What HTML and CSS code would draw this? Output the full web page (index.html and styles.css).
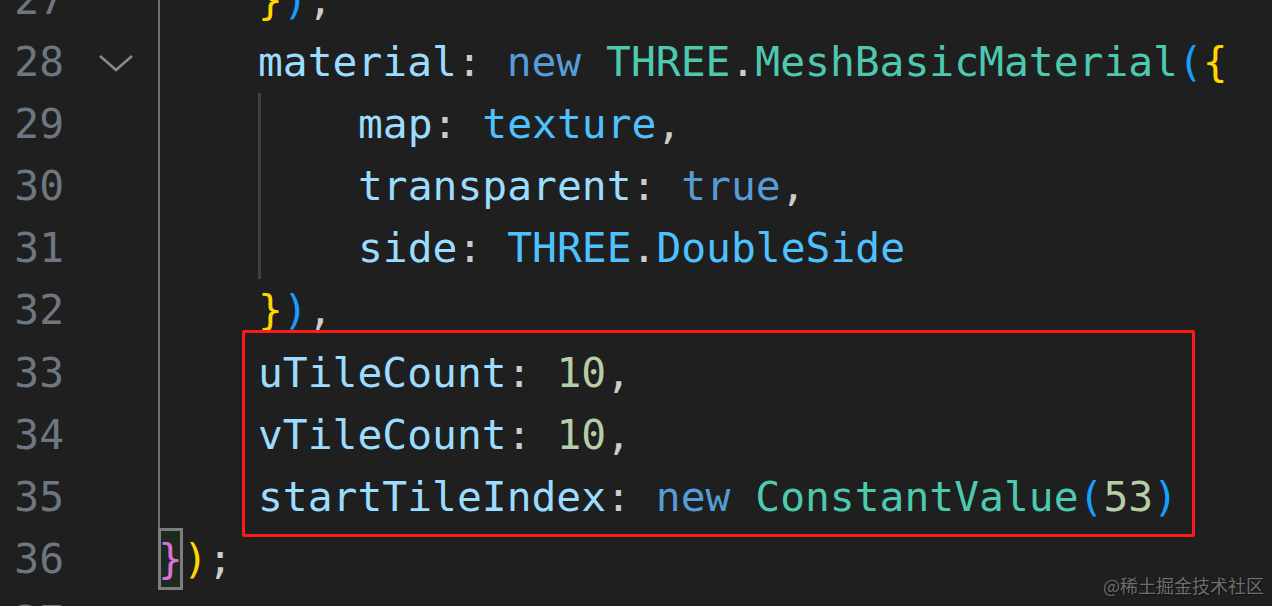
FILE: index.html
```html
<!DOCTYPE html>
<html lang="en">
<head>
<meta charset="utf-8">
<title>Editor</title>
<link rel="stylesheet" href="styles.css">
</head>
<body>
<div class="editor">
  <div class="lines">
    <div class="row"><span class="ln">27</span><span class="fold"></span><span class="code"><span class="ind g1"></span><span class="b1">}</span><span class="b3">)</span><span class="p">,</span></span></div>
    <div class="row"><span class="ln">28</span><span class="fold"><svg class="chev" width="36" height="20" viewBox="0 0 36 20"><polyline points="2,3 18,17 34,3" fill="none" stroke="#8a8a8a" stroke-width="2.6"/></svg></span><span class="code"><span class="ind g1"></span><span class="prop">material</span><span class="p">: </span><span class="kw">new </span><span class="cls">THREE</span><span class="p">.</span><span class="cls">MeshBasicMaterial</span><span class="b3">(</span><span class="b1">{</span></span></div>
    <div class="row"><span class="ln">29</span><span class="fold"></span><span class="code"><span class="ind g1"></span><span class="ind g2"></span><span class="prop">map</span><span class="p">: </span><span class="var">texture</span><span class="p">,</span></span></div>
    <div class="row"><span class="ln">30</span><span class="fold"></span><span class="code"><span class="ind g1"></span><span class="ind g2"></span><span class="prop">transparent</span><span class="p">: </span><span class="kw">true</span><span class="p">,</span></span></div>
    <div class="row"><span class="ln">31</span><span class="fold"></span><span class="code"><span class="ind g1"></span><span class="ind g2"></span><span class="prop">side</span><span class="p">: </span><span class="var">THREE</span><span class="p">.</span><span class="var">DoubleSide</span></span></div>
    <div class="row"><span class="ln">32</span><span class="fold"></span><span class="code"><span class="ind g1"></span><span class="b1">}</span><span class="b3">)</span><span class="p">,</span></span></div>
    <div class="row"><span class="ln">33</span><span class="fold"></span><span class="code"><span class="ind g1"></span><span class="prop">uTileCount</span><span class="p">: </span><span class="num">10</span><span class="p">,</span></span></div>
    <div class="row"><span class="ln">34</span><span class="fold"></span><span class="code"><span class="ind g1"></span><span class="prop">vTileCount</span><span class="p">: </span><span class="num">10</span><span class="p">,</span></span></div>
    <div class="row"><span class="ln">35</span><span class="fold"></span><span class="code"><span class="ind g1"></span><span class="prop">startTileIndex</span><span class="p">: </span><span class="kw">new </span><span class="cls">ConstantValue</span><span class="b3">(</span><span class="num">53</span><span class="b3">)</span></span></div>
    <div class="row"><span class="ln">36</span><span class="fold"></span><span class="code"><span class="b2 match">}</span><span class="b1">)</span><span class="p">;</span></span></div>
    <div class="row"><span class="ln">37</span><span class="fold"></span><span class="code"></span></div>
  </div>
  <div class="highlight"></div>
  <div class="watermark">@稀土掘金技术社区</div>
</div>
</body>
</html>
```
FILE: styles.css
```css
html, body {
  margin: 0;
  padding: 0;
  background: #1f1f1f;
}
.editor {
  position: relative;
  width: 1272px;
  height: 606px;
  overflow: hidden;
  background: #1f1f1f;
  font-family: "DejaVu Sans Mono", monospace;
  font-size: 41.3px;
}
.lines {
  margin-top: -31px;
}
.row {
  display: flex;
  height: 62.1px;
  line-height: 62.1px;
  white-space: pre;
}
.ln {
  width: 64px;
  text-align: right;
  color: #6e7681;
  flex: none;
}
.fold {
  width: 94px;
  flex: none;
  display: flex;
  align-items: center;
  justify-content: center;
  padding-left: 10px;
  box-sizing: border-box;
}
.chev { display: block; margin-top: 2px; }
.code {
  display: flex;
  color: #cccccc;
  height: 100%;
}
.ind {
  display: inline-block;
  width: 100px;
  height: 100%;
  flex: none;
}
.g1 { background: linear-gradient(#707070, #707070) no-repeat -1px 0 / 3px 100%; }
.g2 { background: linear-gradient(#404040, #404040) no-repeat 0 0 / 3px 100%; }
.prop { color: #9cdcfe; }
.var { color: #4fc1ff; }
.kw { color: #569cd6; }
.cls { color: #4ec9b0; }
.num { color: #b5cea8; }
.p { color: #cccccc; }
.b1 { color: #ffd700; }
.b2 { color: #da70d6; }
.b3 { color: #179fff; }
.match {
  box-sizing: border-box;
  outline: 3px solid #7d7d7d;
  outline-offset: -3px;
  background: #1d2a1f;
  height: 100%;
}
.highlight {
  position: absolute;
  left: 242px;
  top: 330px;
  width: 953px;
  height: 207px;
  box-sizing: border-box;
  border: 3px solid #ff1a1a;
  border-radius: 2px;
}
.watermark {
  position: absolute;
  right: 8px;
  bottom: 8px;
  font-family: "Noto Sans CJK SC", sans-serif;
  font-size: 18px;
  color: rgba(140, 140, 140, 0.75);
  text-shadow: 1px 1px 1px rgba(0, 0, 0, 0.5);
}
```
